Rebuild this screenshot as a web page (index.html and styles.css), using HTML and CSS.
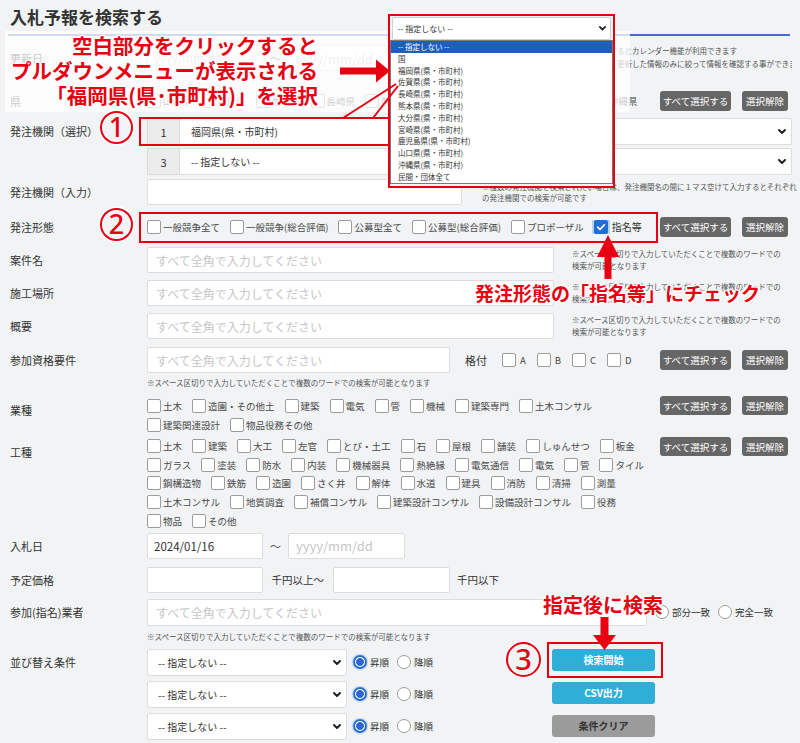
FILE: index.html
```html
<!DOCTYPE html>
<html lang="ja">
<head>
<meta charset="utf-8">
<title>入札予報を検索する</title>
<link rel="stylesheet" href="styles.css">
</head>
<body>
<div class="page">
  <h1 class="page-title">入札予報を検索する</h1>

  <form class="search">
    <div class="row r-update">
      <div class="label">更新日</div>
      <div class="field">
        <input class="input date" value="" placeholder="yyyy/mm/dd">
        <span class="tilde">～</span>
        <input class="input date date-to" placeholder="yyyy/mm/dd">
        <div class="note note-update">※入力欄をクリックするとカレンダー機能が利用できます<br>※指定した日付以降に更新した情報のみに絞って情報を確認する事ができます</div>
      </div>
    </div>

    <div class="row r-pref">
      <div class="label">県</div>
      <div class="field">
        <div class="checks">
          <label class="cb"><span class="box"></span>山口県</label>
          <label class="cb"><span class="box"></span>福岡県</label>
          <label class="cb"><span class="box"></span>佐賀県</label>
          <label class="cb"><span class="box"></span>長崎県</label>
          <label class="cb"><span class="box"></span>熊本県</label>
          <label class="cb"><span class="box"></span>大分県</label>
          <label class="cb"><span class="box"></span>宮崎県</label>
          <label class="cb"><span class="box"></span>鹿児島県</label>
          <label class="cb"><span class="box"></span>沖縄県</label>
        </div>
        <div class="btn-pair"><button type="button" class="btn-sm btn-all">すべて選択する</button><button type="button" class="btn-sm btn-none">選択解除</button></div>
      </div>
    </div>

    <div class="row r-org">
      <div class="label">発注機関（選択）</div>
      <div class="field stack">
        <div class="org-select"><span class="num">1</span><div class="select"><span class="val">福岡県(県・市町村)</span><svg class="chev" viewBox="0 0 8 5"><path d="M1 1l3 3 3-3"/></svg></div></div>
        <div class="org-select"><span class="num">3</span><div class="select"><span class="val">-- 指定しない --</span><svg class="chev" viewBox="0 0 8 5"><path d="M1 1l3 3 3-3"/></svg></div></div>
      </div>
    </div>

    <div class="row r-orginput">
      <div class="label">発注機関（入力）</div>
      <div class="field">
        <input class="input input-org">
        <div class="note note-org">※複数の発注機関を検索されたい場合は、発注機関名の間に１マス空けて入力するとそれぞれ<br>の発注機関での検索が可能です</div>
      </div>
    </div>

    <div class="row r-type">
      <div class="label">発注形態</div>
      <div class="field">
        <div class="checks">
          <label class="cb"><span class="box"></span>一般競争全て</label>
          <label class="cb"><span class="box"></span>一般競争(総合評価)</label>
          <label class="cb"><span class="box"></span>公募型全て</label>
          <label class="cb"><span class="box"></span>公募型(総合評価)</label>
          <label class="cb"><span class="box"></span>プロポーザル</label>
          <label class="cb cb-on"><span class="box on"><svg viewBox="0 0 14 14"><path d="M3.2 7.2l2.6 2.7 5-5.4"/></svg></span>指名等</label>
        </div>
        <div class="btn-pair"><button type="button" class="btn-sm btn-all">すべて選択する</button><button type="button" class="btn-sm btn-none">選択解除</button></div>
      </div>
    </div>

    <div class="row r-name">
      <div class="label">案件名</div>
      <div class="field">
        <input class="input input-wide" placeholder="すべて全角で入力してください">
        <div class="note note-side">※スペース区切りで入力していただくことで複数のワードでの<br>検索が可能となります</div>
      </div>
    </div>

    <div class="row r-place">
      <div class="label">施工場所</div>
      <div class="field">
        <input class="input input-wide" placeholder="すべて全角で入力してください">
        <div class="note note-side">※スペース区切りで入力していただくことで複数のワードでの<br>検索が可能となります</div>
      </div>
    </div>

    <div class="row r-summary">
      <div class="label">概要</div>
      <div class="field">
        <input class="input input-wide" placeholder="すべて全角で入力してください">
        <div class="note note-side">※スペース区切りで入力していただくことで複数のワードでの<br>検索が可能となります</div>
      </div>
    </div>

    <div class="row r-qual">
      <div class="label">参加資格要件</div>
      <div class="field col">
        <div class="line">
          <input class="input input-qual" placeholder="すべて全角で入力してください">
          <span class="grade">格付</span>
          <label class="cb cb-grade"><span class="box"></span>A</label>
          <label class="cb cb-grade"><span class="box"></span>B</label>
          <label class="cb cb-grade"><span class="box"></span>C</label>
          <label class="cb cb-grade"><span class="box"></span>D</label>
          <div class="btn-pair"><button type="button" class="btn-sm btn-all">すべて選択する</button><button type="button" class="btn-sm btn-none">選択解除</button></div>
        </div>
        <div class="note note-below">※スペース区切りで入力していただくことで複数のワードでの検索が可能となります</div>
      </div>
    </div>

    <div class="row r-industry">
      <div class="label">業種</div>
      <div class="field top">
        <div class="check-lines">
          <div class="cb-line">
            <label class="cb"><span class="box"></span>土木</label>
            <label class="cb"><span class="box"></span>造園・その他土</label>
            <label class="cb"><span class="box"></span>建築</label>
            <label class="cb"><span class="box"></span>電気</label>
            <label class="cb"><span class="box"></span>管</label>
            <label class="cb"><span class="box"></span>機械</label>
            <label class="cb"><span class="box"></span>建築専門</label>
            <label class="cb"><span class="box"></span>土木コンサル</label>
          </div>
          <div class="cb-line">
            <label class="cb"><span class="box"></span>建築関連設計</label>
            <label class="cb"><span class="box"></span>物品役務その他</label>
          </div>
        </div>
        <div class="btn-pair"><button type="button" class="btn-sm btn-all">すべて選択する</button><button type="button" class="btn-sm btn-none">選択解除</button></div>
      </div>
    </div>

    <div class="row r-work">
      <div class="label">工種</div>
      <div class="field top">
        <div class="check-lines tight">
          <div class="cb-line">
            <label class="cb"><span class="box"></span>土木</label>
            <label class="cb"><span class="box"></span>建築</label>
            <label class="cb"><span class="box"></span>大工</label>
            <label class="cb"><span class="box"></span>左官</label>
            <label class="cb"><span class="box"></span>とび・土工</label>
            <label class="cb"><span class="box"></span>石</label>
            <label class="cb"><span class="box"></span>屋根</label>
            <label class="cb"><span class="box"></span>舗装</label>
            <label class="cb"><span class="box"></span>しゅんせつ</label>
            <label class="cb"><span class="box"></span>板金</label>
          </div>
          <div class="cb-line">
            <label class="cb"><span class="box"></span>ガラス</label>
            <label class="cb"><span class="box"></span>塗装</label>
            <label class="cb"><span class="box"></span>防水</label>
            <label class="cb"><span class="box"></span>内装</label>
            <label class="cb"><span class="box"></span>機械器具</label>
            <label class="cb"><span class="box"></span>熱絶縁</label>
            <label class="cb"><span class="box"></span>電気通信</label>
            <label class="cb"><span class="box"></span>電気</label>
            <label class="cb"><span class="box"></span>管</label>
            <label class="cb"><span class="box"></span>タイル</label>
          </div>
          <div class="cb-line">
            <label class="cb"><span class="box"></span>鋼構造物</label>
            <label class="cb"><span class="box"></span>鉄筋</label>
            <label class="cb"><span class="box"></span>造園</label>
            <label class="cb"><span class="box"></span>さく井</label>
            <label class="cb"><span class="box"></span>解体</label>
            <label class="cb"><span class="box"></span>水道</label>
            <label class="cb"><span class="box"></span>建具</label>
            <label class="cb"><span class="box"></span>消防</label>
            <label class="cb"><span class="box"></span>清掃</label>
            <label class="cb"><span class="box"></span>測量</label>
          </div>
          <div class="cb-line">
            <label class="cb"><span class="box"></span>土木コンサル</label>
            <label class="cb"><span class="box"></span>地質調査</label>
            <label class="cb"><span class="box"></span>補償コンサル</label>
            <label class="cb"><span class="box"></span>建築設計コンサル</label>
            <label class="cb"><span class="box"></span>設備設計コンサル</label>
            <label class="cb"><span class="box"></span>役務</label>
          </div>
          <div class="cb-line">
            <label class="cb"><span class="box"></span>物品</label>
            <label class="cb"><span class="box"></span>その他</label>
          </div>
        </div>
        <div class="btn-pair"><button type="button" class="btn-sm btn-all">すべて選択する</button><button type="button" class="btn-sm btn-none">選択解除</button></div>
      </div>
    </div>

    <div class="row r-bid">
      <div class="label">入札日</div>
      <div class="field">
        <input class="input date" value="2024/01/16">
        <span class="tilde">～</span>
        <input class="input date date-to" placeholder="yyyy/mm/dd">
      </div>
    </div>

    <div class="row r-price">
      <div class="label">予定価格</div>
      <div class="field">
        <input class="input price">
        <span class="unit unit-from">千円以上～</span>
        <input class="input price price-to">
        <span class="unit unit-to">千円以下</span>
      </div>
    </div>

    <div class="row r-vendor">
      <div class="label">参加(指名)業者</div>
      <div class="field col">
        <div class="line">
          <input class="input input-vendor" placeholder="すべて全角で入力してください">
          <label class="rb"><span class="dot"></span>部分一致</label>
          <label class="rb"><span class="dot"></span>完全一致</label>
        </div>
        <div class="note note-below2">※スペース区切りで入力していただくことで複数のワードでの検索が可能となります</div>
      </div>
    </div>

    <div class="row r-sort">
      <div class="label">並び替え条件</div>
      <div class="field top">
        <div class="sort-list">
          <div class="sort-item">
            <div class="select sort-select"><span class="val">-- 指定しない --</span><svg class="chev" viewBox="0 0 8 5"><path d="M1 1l3 3 3-3"/></svg></div>
            <label class="rb"><span class="dot on"></span>昇順</label>
            <label class="rb"><span class="dot"></span>降順</label>
          </div>
          <div class="sort-item">
            <div class="select sort-select"><span class="val">-- 指定しない --</span><svg class="chev" viewBox="0 0 8 5"><path d="M1 1l3 3 3-3"/></svg></div>
            <label class="rb"><span class="dot on"></span>昇順</label>
            <label class="rb"><span class="dot"></span>降順</label>
          </div>
          <div class="sort-item">
            <div class="select sort-select"><span class="val">-- 指定しない --</span><svg class="chev" viewBox="0 0 8 5"><path d="M1 1l3 3 3-3"/></svg></div>
            <label class="rb"><span class="dot on"></span>昇順</label>
            <label class="rb"><span class="dot"></span>降順</label>
          </div>
        </div>
        <div class="actions">
          <button type="button" class="btn btn-search">検索開始</button>
          <button type="button" class="btn btn-csv">CSV出力</button>
          <button type="button" class="btn btn-reset">条件クリア</button>
        </div>
      </div>
    </div>
  </form>

  <!-- annotation layer -->
  <div class="veil"></div>
  <div class="anno anno-top">空白部分をクリックすると<br>プルダウンメニューが表示される<br>「福岡県(県･市町村)」を選択</div>
  <div class="redbox rb1"></div>
  <div class="redbox rb2"></div>
  <div class="redbox rb3"></div>
  <div class="num-circle nc1">1</div>
  <div class="num-circle nc2">2</div>
  <div class="num-circle nc3">3</div>
  <div class="anno anno-check">発注形態の「指名等」にチェック</div>
  <div class="anno anno-search">指定後に検索</div>

  <div class="dropdown">
    <div class="dd-head"><span>-- 指定しない --</span><svg class="chev chev-sm" viewBox="0 0 8 5"><path d="M1 1l3 3 3-3"/></svg></div>
    <ul class="dd-list">
      <li class="sel">-- 指定しない --</li>
      <li>国</li>
      <li>福岡県(県・市町村)</li>
      <li>佐賀県(県・市町村)</li>
      <li>長崎県(県・市町村)</li>
      <li>熊本県(県・市町村)</li>
      <li>大分県(県・市町村)</li>
      <li>宮崎県(県・市町村)</li>
      <li>鹿児島県(県・市町村)</li>
      <li>山口県(県・市町村)</li>
      <li>沖縄県(県・市町村)</li>
      <li>民間・団体全て</li>
    </ul>
  </div>

  <svg class="anno-svg" viewBox="0 0 800 743" width="800" height="743">
    <polygon points="340,67.5 376,67.5 376,59.5 390,71 376,82.5 376,74.5 340,74.5"/>
    <line x1="343" y1="118" x2="396" y2="84"/>
    <line x1="373" y1="118" x2="398" y2="86"/>
    <polygon points="608,235 619,257 611.5,257 611.5,279 604.5,279 604.5,257 597,257"/>
    <polygon points="600.5,617 608.5,617 608.5,635 616,635 604.5,650 593,635 600.5,635"/>
  </svg>
</div>
</body>
</html>
```

FILE: styles.css
```css
* { box-sizing: border-box; }
html, body { margin: 0; padding: 0; }
body {
  background: #f1f3f5;
  font-family: "Noto Sans CJK JP", "Noto Sans", sans-serif;
  color: #333;
}
.page { position: relative; width: 800px; height: 743px; overflow: hidden; }

.page-title {
  margin: 0 10px 0 8px;
  height: 36px;
  padding: 6px 0 0 2px;
  font-size: 17px;
  line-height: 22px;
  font-weight: 700;
  color: #333;
  border-bottom: 2px solid #4a6cc4;
}

.search { padding: 0 8px 0 10px; }
.row { display: grid; grid-template-columns: 137px 1fr; align-items: center; }
.label { font-size: 11px; line-height: 16px; color: #333; white-space: nowrap; }
.field { display: flex; align-items: center; min-width: 0; }
.field.col { flex-direction: column; align-items: stretch; }
.field.top { align-items: flex-start; }
.line { display: flex; align-items: center; height: 26px; }

.r-update { margin-top: 9px; height: 26px; }
.r-pref { margin-top: 20px; height: 20px; }
.r-org { margin-top: 7px; align-items: start; }
.r-org .label { line-height: 27px; }
.stack { flex-direction: column; align-items: stretch; gap: 3px; }
.r-orginput { margin-top: 4px; height: 26px; }
.r-type { margin-top: 7px; height: 30px; }
.r-name { margin-top: 5px; height: 26px; }
.r-place { margin-top: 7px; height: 26px; }
.r-summary { margin-top: 7px; height: 26px; }
.r-qual { margin-top: 8px; align-items: start; }
.r-qual .label { line-height: 26px; }
.r-industry { margin-top: 7.5px; align-items: start; }
.r-industry .label { padding-top: 6px; }
.r-work { margin-top: 3px; align-items: start; }
.r-work .label { padding-top: 7px; }
.r-bid { margin-top: 3px; height: 26px; }
.r-price { margin-top: 8px; height: 26px; }
.r-vendor { margin-top: 6px; align-items: start; }
.r-vendor .label { line-height: 27px; }
.r-vendor .line { height: 27px; }
.r-sort { margin-top: 6.5px; align-items: start; }
.r-sort .label { line-height: 27px; }

/* inputs */
.input {
  height: 26px;
  border: 1px solid #dcdcdc;
  border-radius: 2px;
  background: #fff;
  padding: 0 8px;
  font-family: inherit;
  font-size: 12px;
  color: #333;
  outline: none;
}
.input::placeholder { color: #c6c6c6; }
.input.date { width: 116px; font-size: 11.5px; padding-left: 6px; }
.input.date-to { width: 117px; font-size: 13px; padding-left: 7px; }
.input.price { width: 116px; }
.input.price-to { width: 117px; }
.input-wide { width: 407px; flex: none; }
.input-org { width: 315px; flex: none; }
.input-qual { width: 303px; flex: none; }
.input-vendor { width: 500px; flex: none; height: 27px; }
.tilde { font-size: 11px; margin: 0 7px; color: #555; }
.unit { font-size: 10.5px; color: #333; white-space: nowrap; }
.unit-from { margin: 0 9px 0 8.5px; }
.unit-to { margin-left: 7px; }

/* notes */
.note { font-size: 7.5px; line-height: 11.5px; color: #555; white-space: nowrap; }
.note-update { margin-left: 137px; line-height: 13px; align-self: flex-start; margin-top: -1px; overflow: hidden; flex: 1; min-width: 0; }
.note-org { margin-left: 20px; align-self: flex-start; padding-top: 1.5px; line-height: 11px; }
.note-side { margin-left: 18px; align-self: flex-start; padding-top: 1px; }
.note-below { margin-top: 4px; }
.note-below2 { margin-top: 5px; }

/* select */
.select {
  display: flex;
  align-items: center;
  height: 27px;
  background: #fff;
  border: 1px solid #dcdcdc;
  border-radius: 2px;
  padding: 0 5px 0 10px;
  font-size: 10px;
  color: #333;
}
.select .val { flex: 1; white-space: nowrap; }
.chev { width: 8px; height: 5px; flex: none; }
.chev path { fill: none; stroke: #1e1e1e; stroke-width: 1.9; stroke-linecap: round; stroke-linejoin: round; }
.org-select { display: flex; height: 27px; }
.org-select .num {
  width: 33px; flex: none;
  display: flex; align-items: center; justify-content: center;
  background: #ececec;
  border: 1px solid #dcdcdc;
  font-size: 11px;
  color: #333;
}
.org-select .select { flex: 1; border-left: none; padding-left: 11px; }

/* checkboxes */
.checks { display: flex; align-items: center; flex: 1; min-width: 0; overflow: hidden; white-space: nowrap; }
.check-lines { flex: 1; }
.cb-line { display: flex; align-items: center; height: 19px; white-space: nowrap; }
.tight .cb-line { height: 18.6px; }
.cb { display: inline-flex; align-items: center; font-size: 9.5px; line-height: 14px; color: #4a4a4a; margin-right: 10px; white-space: nowrap; flex: none; }
.cb .box {
  width: 14px; height: 14px; flex: none;
  border: 1px solid #9c9c9c;
  border-radius: 2px;
  background: #fff;
  margin-right: 2px;
}
.cb .box.on {
  background: #1f6fd6;
  border-color: #1f6fd6;
  box-shadow: 0 0 0 2px #b9d2f2;
  margin-right: 4px;
}
.cb .box.on svg { display: block; width: 12px; height: 12px; }
.cb .box.on path { fill: none; stroke: #fff; stroke-width: 2; stroke-linecap: round; stroke-linejoin: round; }
.cb-on { color: #333; font-size: 10px; }
.grade { font-size: 11px; color: #333; margin: 0 15px; }
.cb-grade { margin-right: 11px; }
.cb-grade .box { margin-right: 4px; }

/* radios */
.rb { display: inline-flex; align-items: center; font-size: 9.5px; color: #333; margin-left: 8px; white-space: nowrap; }
.rb .dot {
  width: 14px; height: 14px; flex: none;
  border: 1px solid #9c9c9c;
  border-radius: 50%;
  background: #fff;
  margin-right: 3px;
}
.rb .dot.on {
  border: 2px solid #2a6bd1;
  background: radial-gradient(circle, #2a6bd1 0 3.6px, #fff 4.2px);
  box-shadow: 0 0 0 1.5px #cfe0f6;
}

/* small buttons */
.btn-pair { display: flex; margin-left: auto; margin-right: 4px; flex: none; }
.btn-sm {
  height: 20px;
  border: none;
  border-radius: 3px;
  background: #666;
  color: #fff;
  font-family: inherit;
  font-size: 9.5px;
  padding: 0;
  cursor: pointer;
}
.btn-all { width: 71px; }
.btn-none { width: 46px; margin-left: 11px; }
.r-industry .btn-pair, .r-work .btn-pair { margin-top: 0; height: 19px; }
.r-industry .btn-sm, .r-work .btn-sm { height: 19px; }

/* sort + actions */
.sort-list { width: 405px; flex: none; display: flex; flex-direction: column; gap: 5px; }
.sort-item { display: flex; align-items: center; }
.sort-select { width: 200px; flex: none; }
.sort-item .rb:first-of-type { margin-left: 6px; }
.actions { display: flex; flex-direction: column; gap: 11px; width: 103px; }
.btn {
  height: 22px;
  border: none;
  border-radius: 3px;
  font-family: inherit;
  font-size: 10px;
  font-weight: 700;
  color: #fff;
  padding: 0;
}
.btn-search, .btn-csv { background: #2fafd7; }
.btn-reset { background: #9b9b9b; color: #333; }

/* annotation layer */
.veil { position: absolute; left: 5px; top: 31px; width: 625px; height: 81px; background: rgba(255, 255, 255, 0.74); }
.anno {
  position: absolute;
  color: #e60012;
  font-weight: 700;
  white-space: nowrap;
  text-shadow:
    1.5px 0 0 #fff, -1.5px 0 0 #fff, 0 1.5px 0 #fff, 0 -1.5px 0 #fff,
    1px 1px 0 #fff, -1px -1px 0 #fff, 1px -1px 0 #fff, -1px 1px 0 #fff,
    0 0 3px #fff;
}
.anno-top { left: 0; top: 32.5px; width: 318px; text-align: right; font-size: 20.5px; line-height: 25px; }
.anno-check { left: 475px; top: 281px; font-size: 19px; line-height: 24px; }
.anno-search { left: 543px; top: 593px; font-size: 20px; line-height: 24px; }

.redbox { position: absolute; border: 2px solid #e60012; }
.rb1 { left: 139px; top: 117px; width: 470px; height: 29px; }
.rb2 { left: 139px; top: 212px; width: 519px; height: 31px; }
.rb3 { left: 547px; top: 642px; width: 116px; height: 36px; }

.num-circle {
  position: absolute;
  width: 33px; height: 33px;
  border: 2.5px solid #e60012;
  border-radius: 50%;
  color: #e60012;
  font-family: "Noto Sans", sans-serif;
  font-weight: 500;
  font-size: 27px;
  line-height: 28px;
  text-align: center;
  box-shadow: 0 0 0 1.5px #fff, inset 0 0 0 1px #fff;
}
.nc1 { left: 100px; top: 111px; }
.nc2 { left: 100px; top: 208px; }
.nc3 { left: 506px; top: 642px; width: 35px; height: 35px; line-height: 30px; font-size: 29px; }

.dropdown {
  position: absolute;
  left: 388px; top: 14px;
  width: 227px; height: 174px;
  border: 2px solid #e60012;
  background: #f3f4f5;
}
.dd-head {
  margin: 1px 2px 0 2px;
  height: 23px;
  background: #fff;
  border: 1px solid #cfcfcf;
  border-radius: 2px;
  display: flex;
  align-items: center;
  justify-content: space-between;
  padding: 0 4px 0 5px;
  font-size: 8px;
  color: #333;
}
.chev-sm { width: 7px; height: 4.5px; }
.dd-list { list-style: none; margin: 0; padding: 0; border: 1px solid #7a7a7a; background: #fff; }
.dd-list li { height: 11.8px; line-height: 11.8px; padding-left: 7px; font-size: 7.5px; color: #333; white-space: nowrap; }
.dd-list li.sel { background: #1f5fb5; color: #fff; }

.anno-svg { position: absolute; left: 0; top: 0; pointer-events: none; }
.anno-svg polygon { fill: #e60012; }
.anno-svg line { stroke: #e60012; stroke-width: 2; }
```
